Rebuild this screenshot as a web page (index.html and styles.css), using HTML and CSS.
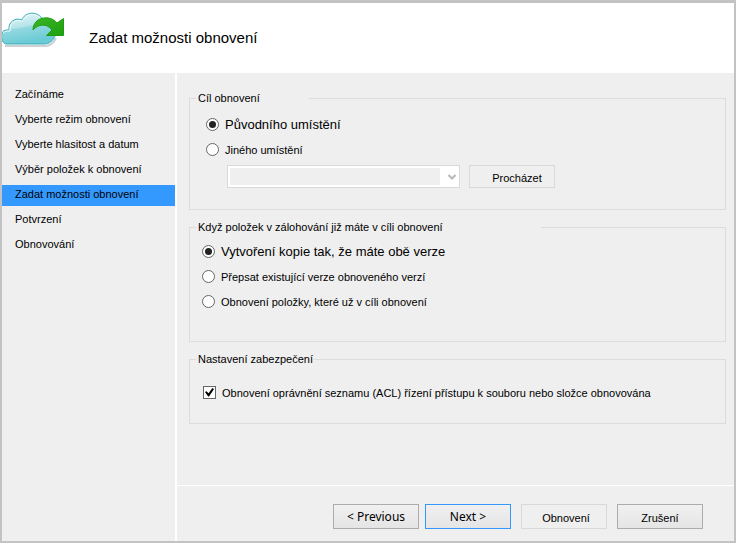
FILE: index.html
```html
<!DOCTYPE html>
<html lang="cs">
<head>
<meta charset="utf-8">
<meta name="viewport" content="width=device-width, initial-scale=1">
<title>Zadat možnosti obnovení</title>
<link rel="stylesheet" href="styles.css">
</head>
<body>
<form class="wizard">
  <header class="header">
    <svg class="logo" width="63" height="38" viewBox="0 0 63 38" aria-hidden="true">
      <defs>
        <linearGradient id="cloud" x1="0" y1="0" x2="0.3" y2="1">
          <stop offset="0" stop-color="#eefafb"/>
          <stop offset="0.5" stop-color="#b5e4e9"/>
          <stop offset="0.55" stop-color="#93d8df"/>
          <stop offset="1" stop-color="#69cbd5"/>
        </linearGradient>
        <linearGradient id="arrow" x1="0" y1="0" x2="1" y2="1">
          <stop offset="0" stop-color="#3cb522"/>
          <stop offset="1" stop-color="#1ea010"/>
        </linearGradient>
      </defs>
      <path d="M3 36 H44 Q51 35 54 28" fill="none" stroke="#ccd2d4" stroke-width="2"/>
      <path d="M4 34 C-1 33 -1 25 0.500 22 C2 20 4 20 7 20 C6 12 13 7 20 10 C22 2 36 0 41 10 C49 9 55 17 53 26 C51 31 47 34 42 34 Z" fill="url(#cloud)" stroke="#3aabb9"/>
      <path d="M1 23 C3 21 5 21 8 21 C7 14 13 8 20.500 11.500 C23 3 35 2 40 10" fill="none" stroke="#f2fcfc"/>
      <path d="M31 20 C31 7 48 4 55 13 L61.500 8.500 V25.500 H44.500 L50 20 C45 13 36 14 31 20 Z" fill="url(#arrow)" stroke="#1f9a15"/>
    </svg>
    <h1 class="title">Zadat možnosti obnovení</h1>
  </header>
  <div class="body">
    <nav class="steps">
      <a class="step" href="#">Začínáme</a>
      <a class="step" href="#">Vyberte režim obnovení</a>
      <a class="step" href="#">Vyberte hlasitost a datum</a>
      <a class="step" href="#">Výběr položek k obnovení</a>
      <a class="step step-current" href="#" aria-current="step">Zadat možnosti obnovení</a>
      <a class="step" href="#">Potvrzení</a>
      <a class="step" href="#">Obnovování</a>
    </nav>
    <div class="panel">
      <main class="content">
        <fieldset class="group group-target">
          <legend class="legend legend-medium">Cíl obnovení</legend>
          <label class="option option-large"><input class="radio" type="radio" name="target" checked>Původního umístění</label>
          <label class="option"><input class="radio" type="radio" name="target">Jiného umístění</label>
          <div class="location">
            <div class="combo">
              <select class="select" aria-label="Jiného umístění" disabled><option></option></select>
              <svg class="chevron" width="8" height="7" viewBox="0 0 8 7" aria-hidden="true"><path d="M0.500 1 L4 4.500 L7.500 1" fill="none" stroke="#b9b9b9" stroke-width="2"/></svg>
            </div>
            <button class="button button-browse" type="button">Procházet</button>
          </div>
        </fieldset>
        <fieldset class="group group-conflict">
          <legend class="legend legend-wide">Když položek v zálohování již máte v cíli obnovení</legend>
          <label class="option option-large"><input class="radio" type="radio" name="conflict" checked>Vytvoření kopie tak, že máte obě verze</label>
          <label class="option"><input class="radio" type="radio" name="conflict">Přepsat existující verze obnoveného verzí</label>
          <label class="option"><input class="radio" type="radio" name="conflict">Obnovení položky, které už v cíli obnovení</label>
        </fieldset>
        <fieldset class="group group-security">
          <legend class="legend">Nastavení zabezpečení</legend>
          <label class="option"><input class="checkbox" type="checkbox" checked>Obnovení oprávnění seznamu (ACL) řízení přístupu k souboru nebo složce obnovována</label>
        </fieldset>
      </main>
      <footer class="footer">
        <div class="pair">
          <button class="button button-nav" type="button">&lt; Previous</button>
          <button class="button button-nav button-default" type="button">Next &gt;</button>
        </div>
        <button class="button button-disabled" type="button" disabled>Obnovení</button>
        <button class="button" type="button">Zrušení</button>
      </footer>
    </div>
  </div>
</form>
</body>
</html>
```

FILE: styles.css
```css
* {
  box-sizing: border-box;
}

body {
  margin: 0;
  font: 11px/18px "Liberation Sans", Arial, sans-serif;
  color: #000;
}

.wizard {
  display: flex;
  flex-direction: column;
  min-height: 100vh;
  border: 2px solid #c3c3c3;
  border-top-width: 3px;
  background: #efefef;
}

.header {
  display: flex;
  align-items: flex-start;
  gap: 24px;
  height: 70px;
  padding-top: 7px;
  background: #fff;
}

.title {
  margin: 18px 0 0;
  font-size: 15px;
  font-weight: 400;
  line-height: 20px;
}

.body {
  display: flex;
  flex: 1;
}

.steps {
  display: flex;
  flex-direction: column;
  gap: 4px;
  flex: 0 0 175px;
  padding-top: 12px;
  border-right: 2px solid #fff;
}

.step {
  padding: 0 0 3px 13px;
  color: #000;
  text-decoration: none;
}

.step-current {
  background: #3399ff;
}

.panel {
  display: flex;
  flex-direction: column;
  flex: 1;
}

.content {
  display: flex;
  flex-direction: column;
  flex: 1;
  gap: 8px;
  padding: 16px 8px 0 12px;
}

.group {
  min-width: 0;
  margin: 0;
  border: 1px solid #dcdcdc;
}

.group-target {
  padding: 5px 16px 21px;
}

.group-conflict {
  padding: 3px 12px 27px;
}

.group-security {
  padding: 12px 13px 18px;
}

.legend {
  margin-left: -8px;
  padding: 0 1px 0 2px;
}

.group-target .legend {
  margin-left: -10px;
}

.group-conflict .legend {
  margin-left: -6px;
}

.group-security .legend {
  margin-left: -7px;
}

.legend-medium {
  min-width: 113px;
}

.legend-wide {
  min-width: 345px;
}

.option {
  display: flex;
  align-items: center;
  gap: 6px;
  height: 25px;
}

.option-large {
  font-size: 13px;
}

.radio,
.checkbox {
  display: grid;
  place-items: center;
  appearance: none;
  flex: none;
  width: 13px;
  height: 13px;
  margin: 0;
  border: 1px solid #666;
  background: #fff;
}

.radio {
  border-radius: 50%;
}

.radio:checked::after {
  content: "";
  width: 7px;
  height: 7px;
  border-radius: 50%;
  background: #222;
}

.checkbox:checked::after {
  content: "";
  width: 9px;
  height: 9px;
  background: #000;
  clip-path: polygon(0 45%, 15% 35%, 40% 58%, 82% 0, 100% 12%, 45% 95%, 35% 95%);
}

.location {
  display: flex;
  align-items: center;
  gap: 9px;
  margin: 3px 0 0 21px;
}

.combo {
  position: relative;
  width: 233px;
}

.select {
  display: block;
  appearance: none;
  width: 100%;
  height: 23px;
  border: 1px solid #d9d9d9;
  border-radius: 0;
  background: linear-gradient(#efefef, #efefef) 2px 2px / 210px 17px no-repeat #fff;
  opacity: 1;
}

.chevron {
  position: absolute;
  top: 9px;
  right: 4px;
}

.button {
  width: 86px;
  height: 25px;
  padding: 2px 0 0;
  border: 1px solid #acacac;
  border-radius: 0;
  background: linear-gradient(#f0f0f0, #e5e5e5);
  color: #000;
  font: inherit;
}

.button-browse {
  height: 23px;
  padding-left: 10px;
  border-color: #d9d9d9;
  background: #efefef;
}

.button-nav {
  padding: 0;
  font-family: "Noto Sans", sans-serif;
  font-size: 12px;
}

.button-default {
  border-color: #3399ff;
}

.button-disabled {
  padding-left: 4px;
  border-color: #d9d9d9;
  background: #efefef;
}

.footer {
  display: flex;
  justify-content: flex-end;
  gap: 10px;
  padding: 18px 31px 12px;
  border-top: 1px solid #fff;
}

.pair {
  display: flex;
  gap: 6px;
}
```
